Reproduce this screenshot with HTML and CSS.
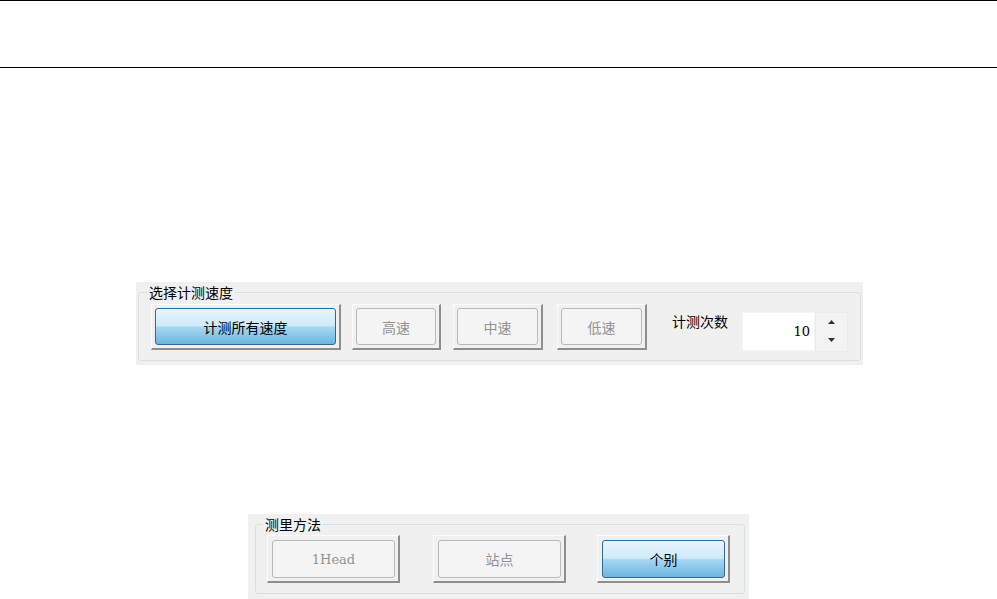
FILE: index.html
```html
<!DOCTYPE html>
<html lang="zh-CN">

<head>
    <meta charset="UTF-8">
    <meta name="viewport" content="width=device-width, initial-scale=1.0">
    <title>计测设定</title>
    <link rel="stylesheet" href="styles.css">
</head>

<body>

<div class="top-bar"></div>

<div class="panel speed">
    <fieldset>
        <legend>选择计测速度</legend>
        <div class="row">
            <div class="btn btn-all"><div class="face active">计测所有速度</div></div>
            <div class="btn btn-high"><div class="face off">高速</div></div>
            <div class="btn btn-mid"><div class="face off">中速</div></div>
            <div class="btn btn-low"><div class="face off">低速</div></div>
            <label class="count-label" for="count">计测次数</label>
            <div class="spinner">
                <input type="text" id="count" value="10">
                <div class="spin-btns">
                    <svg width="7" height="4" viewBox="0 0 7 4"><polygon points="0,4 3.5,0 7,4" fill="#333"/></svg>
                    <svg width="7" height="4" viewBox="0 0 7 4"><polygon points="0,0 7,0 3.5,4" fill="#333"/></svg>
                </div>
            </div>
        </div>
    </fieldset>
</div>

<div class="panel method">
    <fieldset>
        <legend>测里方法</legend>
        <div class="row">
            <div class="btn btn-head"><div class="face off latin">1Head</div></div>
            <div class="btn btn-site"><div class="face off">站点</div></div>
            <div class="btn btn-each"><div class="face active">个别</div></div>
        </div>
    </fieldset>
</div>

</body>
</html>
```

FILE: styles.css
```css
body {
    margin: 0;
    padding: 0;
    background-color: #fff;
    font-family: "Noto Sans CJK SC", "Noto Sans", sans-serif;
    font-size: 14px;
    color: #000;
}

.top-bar {
    height: 66px;
    border-top: 1px solid #000;
    border-bottom: 1px solid #000;
}

/* gray window panels */
.panel {
    background-color: #f0f0f0;
    box-sizing: border-box;
}

.speed {
    margin: 214px 0 0 136px;
    width: 727px;
    padding: 2px 4px 4px 2px;
}

.method {
    margin: 149px 0 0 248px;
    width: 501px;
    padding: 2px 4px 7px 7px;
}

fieldset {
    margin: 0;
    border: 1px solid #d7dfe5;
    border-radius: 3px;
}

.speed fieldset {
    padding: 4px 12px 8px 12px;
}

.method fieldset {
    padding: 3px 11px 10px 11px;
}

legend {
    padding: 0 2px;
    margin-left: -4px;
    line-height: 16px;
    font-size: 14px;
}

.row {
    display: flex;
    align-items: flex-start;
}

/* old style 3D frame round the buttons */
.btn {
    display: flex;
    box-sizing: border-box;
    border-top: 1px solid #fcfcfc;
    border-left: 1px solid #fcfcfc;
    border-right: 2px solid #8e8e8e;
    border-bottom: 2px solid #8e8e8e;
    padding: 3px;
}

.speed .btn {
    height: 46px;
}

.method .btn {
    height: 48px;
    padding: 4px 3px 3px 4px;
}

.face {
    flex: 1;
    display: flex;
    align-items: center;
    justify-content: center;
    border-radius: 3px;
    font-size: 14px;
}

.face.active {
    border: 1px solid #2f6a96;
    background: linear-gradient(to bottom, #e8f5fc 0%, #cfeaf9 48%, #a6d7f2 52%, #6db5de 100%);
    color: #000;
}

.face.off {
    border: 1px solid #b9b9b9;
    background-color: #f4f4f4;
    color: #929292;
}

.face.latin {
    font-family: "DejaVu Serif", "Liberation Serif", serif;
    font-size: 13px;
}

.btn-all { width: 190px; }
.btn-high { width: 89px; margin-left: 11px; }
.btn-mid { width: 90px; margin-left: 12px; }
.btn-low { width: 90px; margin-left: 14px; }

.btn-head { width: 133px; }
.btn-site { width: 133px; margin-left: 33px; }
.btn-each { width: 133px; margin-left: 31px; }

.count-label {
    margin: 7px 0 0 25px;
    line-height: 20px;
    width: 56px;
    font-size: 14px;
}

.spinner {
    display: flex;
    margin: 8px 0 0 14px;
    height: 40px;
}

.spinner input {
    width: 73px;
    height: 39px;
    box-sizing: border-box;
    border: 1px solid #f4f4f4;
    background-color: #fff;
    text-align: right;
    padding: 0 4px 0 0;
    font-family: "DejaVu Serif", "Liberation Serif", serif;
    font-size: 13px;
    color: #000;
    outline: none;
}

.spin-btns {
    width: 33px;
    box-sizing: border-box;
    background-color: #f3f3f3;
    border: 1px solid #ebebeb;
    display: flex;
    flex-direction: column;
    align-items: center;
    justify-content: space-between;
    padding: 7px 0 9px 0;
}
```
